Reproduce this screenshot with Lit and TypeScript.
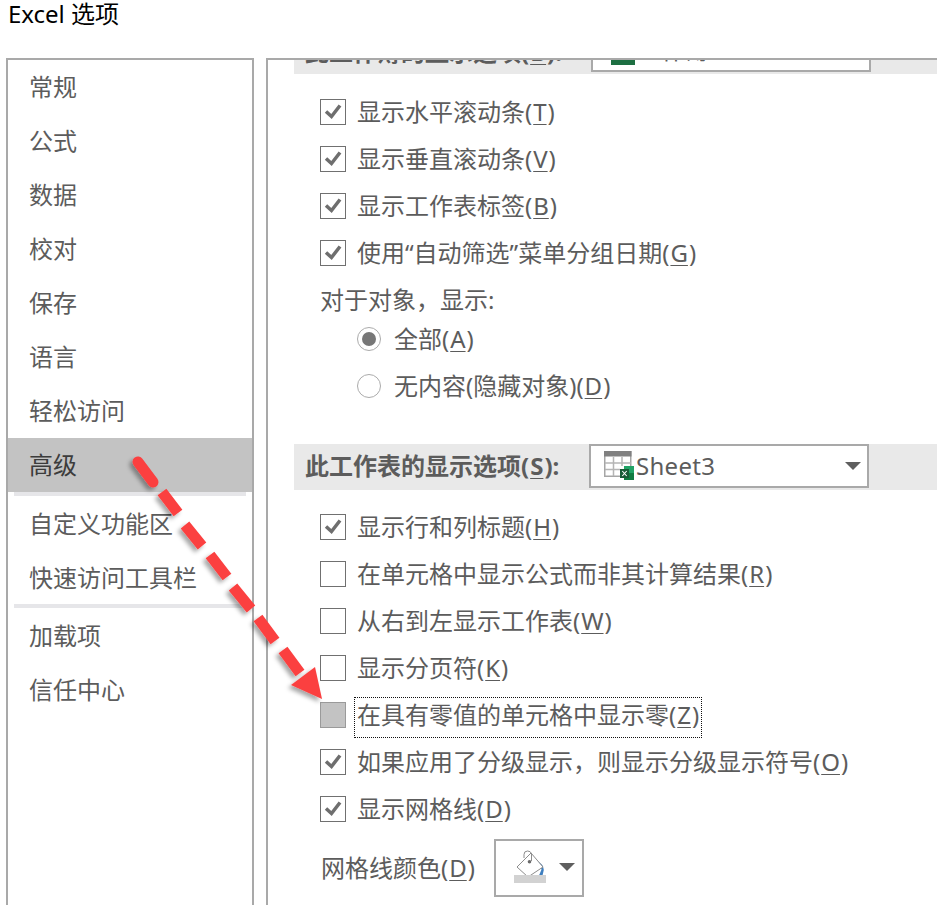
import { LitElement, html, css } from "lit";
import { customElement } from "lit/decorators.js";

const nav: [string, string?][] = [
  ["常规"], ["公式"], ["数据"], ["校对"], ["保存"], ["语言"], ["轻松访问"],
  ["高级", "sel"], ["自定义功能区", "after-sel"], ["快速访问工具栏", "sep"], ["加载项", "after-sep"], ["信任中心"],
];

const check = (on: boolean, cls = "") => html`<span class="cb ${cls}">${on
  ? html`<svg width="22" height="22" viewBox="0 0 22 22"><path d="M4 10.500 9.500 15.500 18 4.500" fill="none" stroke="#6e6e6e" stroke-width="3.500"/></svg>`
  : ""}</span>`;

const label = (t: string, k: string, tail = ")") =>
  html`${t}(<u>${k}</u>${tail}`;

const sheetIcon = html`<svg class="sheet" width="30" height="30" viewBox="0 0 30 30">
  <rect x="0.750" y="0.750" width="26" height="24.500" fill="#fff" stroke="#a6a6a6" stroke-width="1.500"/>
  <rect x="0" y="0" width="27.500" height="5.500" fill="#808080"/>
  <path d="M1 12H27M1 18.500H27M9.500 6V25M18 6V25" stroke="#b5b5b5" stroke-width="1.500" fill="none"/>
  <rect x="16" y="15" width="14" height="14" fill="#fff"/>
  <rect x="20" y="15" width="10" height="7" fill="#21a366"/>
  <rect x="20" y="22" width="10" height="7" fill="#107c41"/>
  <rect x="16" y="18" width="9" height="9" fill="#185c37"/>
  <path d="M18.300 20 22.700 25M22.700 20 18.300 25" stroke="#fff" stroke-width="1.100"/>
</svg>`;

const bucket = html`<svg width="32" height="34" viewBox="0 0 32 34">
  <path d="M23 11Q29.500 14 29.800 20L28.500 25.500H25L27.500 19.500Z" fill="#3f7fbf"/>
  <path d="M17 3 3 17 14 27 29 17Z" fill="#fff" stroke="#8c8c8c" stroke-width="1"/>
  <path d="M10 8V4.500Q10 1 13.500 1 16.500 1 17.500 3.500V11" fill="none" stroke="#8c8c8c" stroke-width="1"/>
  <circle cx="15.500" cy="11.700" r="1.800" fill="#6a6a6a"/>
  <rect x="0" y="25" width="32" height="8" fill="#d2d2d2"/>
</svg>`;

@customElement("app-root")
export class AppRoot extends LitElement {
  static styles = css`
    :host {
      display: block;
      height: 905px;
      overflow: hidden;
      position: relative;
      background: #fff;
      font-family: "Noto Sans", "Noto Sans CJK SC", sans-serif;
      font-size: 24px;
      color: #5c5c5c;
    }
    .title {
      height: 58px;
      padding: 0 0 0 8px;
      box-sizing: border-box;
      font-size: 24px;
      line-height: 28px;
      color: #000;
    }
    .panes { display: flex; gap: 12px; padding-left: 6px; height: 847px; }
    .nav {
      width: 248px;
      box-sizing: border-box;
      border: 2px solid #a9a9a9;
      border-bottom: none;
      flex: none;
    }
    .nav-item {
      height: 54px;
      line-height: 54px;
      padding-left: 21px;
      white-space: nowrap;
    }
    .nav-item.sel { background: #c3c3c3; color: #3c3c3c; }
    .nav-item.after-sel {
      border-top: 4px solid #e6e6e9;
      margin: 0 6px;
      padding: 1px 0 0 15px;
    }
    .nav-item.sep {
      height: 53px;
      border-bottom: 4px solid #e6e6e9;
      margin: 0 6px;
      padding-left: 15px;
    }
    .nav-item.after-sep { margin-top: 1px; }
    .main {
      flex: 1;
      border-left: 2px solid #a9a9a9;
      border-top: 2px solid #a9a9a9;
      overflow: hidden;
      min-width: 0;
    }
    .bar {
      margin-left: 26px;
      height: 46px;
      background: #e9e9e9;
      display: flex;
      align-items: flex-start;
      font-weight: 700;
      color: #5c5c5c;
      white-space: nowrap;
    }
    .bar.top { margin-top: -32px; }
    .bar.second { margin-top: 33px; }
    .bar .cap { width: 295px; flex: none; padding-left: 11px; box-sizing: border-box; line-height: 44px; }
    .bar.top .cap { width: 297px; line-height: 47px; }
    .select {
      width: 280px;
      height: 44px;
      box-sizing: border-box;
      border: 2px solid #a9a9a9;
      background: #fff;
      display: flex;
      align-items: center;
      padding-left: 13px;
      gap: 2px;
      font-weight: 400;
    }
    .bar.top .select { padding-left: 18px; gap: 2px; }
    .green { width: 24px; height: 30px; background: #1d6f42; flex: none; }
    .select .name { flex: 1; line-height: 40px; letter-spacing: 0.3px; }
    .tri {
      width: 0; height: 0;
      border-left: 8px solid transparent;
      border-right: 8px solid transparent;
      border-top: 8px solid #5f5f5f;
      flex: none;
    }
    .select .tri { margin-right: 6px; }
    .rows { margin-left: 52px; }
    .rows.a { margin-top: 16px; }
    .rows.b { margin-top: 15px; }
    .row { height: 47px; display: flex; align-items: center; white-space: nowrap; }
    .cb {
      width: 26px; height: 26px;
      box-sizing: border-box;
      border: 1.5px solid #707070;
      background: #fff;
      flex: none;
      margin-right: 11px;
      margin-top: -4px;
      display: flex;
      align-items: center;
      justify-content: center;
    }
    .cb.grey { background: #c3c3c3; border-color: #9a9a9a; }
    .txt { line-height: 32px; margin-top: -4px; }
    .focus {
      outline: 1.5px dotted #111;
      padding: 1px 2px 6px 2px;
      margin-left: -2px;
      margin-top: 2px;
    }
    u { text-underline-offset: 3px; text-decoration-thickness: 1px; margin: 0 1px; }
    .lbl { height: 31px; margin-top: 6px; margin-bottom: 2px; line-height: 31px; }
    .radio-row { margin-left: 37px; }
    .radio {
      width: 24px; height: 24px;
      box-sizing: border-box;
      border: 1.5px solid #ababab;
      border-radius: 50%;
      background: #fff;
      flex: none;
      margin-right: 13px;
      margin-top: -3px;
      display: flex;
      align-items: center;
      justify-content: center;
    }
    .radio i { display: block; width: 14px; height: 14px; border-radius: 50%; background: #777; }
    .color-row { margin-top: 5px; height: 58px; display: flex; align-items: center; white-space: nowrap; margin-left: 1px; }
    .color-row .txt { margin-top: 0; }
    .swatch {
      margin-left: 19px;
      width: 90px; height: 58px;
      box-sizing: border-box;
      border: 2px solid #a9a9a9;
      background: #fff;
      display: flex;
      align-items: center;
      padding-left: 18px;
    }
    .swatch svg { display: block; margin-top: -2px; flex: none; }
    .swatch .tri { margin-left: 13px; margin-top: -2px; }
    .arrow { position: absolute; left: 0; top: 0; pointer-events: none; }
  `;

  render() {
    return html`
      <div class="title">Excel 选项</div>
      <div class="panes">
        <div class="nav">
          ${nav.map(([t, c]) => html`<div class="nav-item ${c ?? ""}">${t}</div>`)}
        </div>
        <div class="main">
          <div class="bar top">
            <div class="cap">此工作簿的显示选项(<u>B</u>):</div>
            <div class="select">
              <span class="green"></span>
              <span class="name">工作簿</span>
            </div>
          </div>
          <div class="rows a">
            <div class="row">${check(true)}<span class="txt">${label("显示水平滚动条", "T")}</span></div>
            <div class="row">${check(true)}<span class="txt">${label("显示垂直滚动条", "V")}</span></div>
            <div class="row">${check(true)}<span class="txt">${label("显示工作表标签", "B")}</span></div>
            <div class="row">${check(true)}<span class="txt">${label("使用“自动筛选”菜单分组日期", "G")}</span></div>
            <div class="lbl">对于对象，显示:</div>
            <div class="row radio-row"><span class="radio"><i></i></span><span class="txt">${label("全部", "A")}</span></div>
            <div class="row radio-row"><span class="radio"></span><span class="txt">${label("无内容(隐藏对象)", "D")}</span></div>
          </div>
          <div class="bar second">
            <div class="cap">此工作表的显示选项(<u>S</u>):</div>
            <div class="select">${sheetIcon}<span class="name">Sheet3</span><span class="tri"></span></div>
          </div>
          <div class="rows b">
            <div class="row">${check(true)}<span class="txt">${label("显示行和列标题", "H")}</span></div>
            <div class="row">${check(false)}<span class="txt">${label("在单元格中显示公式而非其计算结果", "R")}</span></div>
            <div class="row">${check(false)}<span class="txt">${label("从右到左显示工作表", "W")}</span></div>
            <div class="row">${check(false)}<span class="txt">${label("显示分页符", "K")}</span></div>
            <div class="row">${check(false, "grey")}<span class="txt focus">${label("在具有零值的单元格中显示零", "Z")}</span></div>
            <div class="row">${check(true)}<span class="txt">${label("如果应用了分级显示，则显示分级显示符号", "O")}</span></div>
            <div class="row">${check(true)}<span class="txt">${label("显示网格线", "D")}</span></div>
            <div class="color-row">
              <span class="txt">${label("网格线颜色", "D")}</span>
              <span class="swatch">${bucket}<span class="tri"></span></span>
            </div>
          </div>
        </div>
      </div>
      <svg class="arrow" width="937" height="905" viewBox="0 0 937 905">
        <defs><filter id="s" x="-20%" y="-20%" width="140%" height="140%"><feDropShadow dx="-3" dy="3" stdDeviation="2" flood-color="#000" flood-opacity=".35"/></filter></defs>
        <g filter="url(#s)">
          <path d="M138 462 153 482" stroke="#fb4141" stroke-width="11" stroke-linecap="round" fill="none"/>
          <path d="M162 492 178 513M185 525 202 546M210 555 227 577M233 587 251 609M258 618 275 641M283 650 300 673" stroke="#fb4141" stroke-width="11" fill="none"/>
          <path d="M315 667 291 685 322 699Z" fill="#fb4141"/>
        </g>
      </svg>
    `;
  }
}
